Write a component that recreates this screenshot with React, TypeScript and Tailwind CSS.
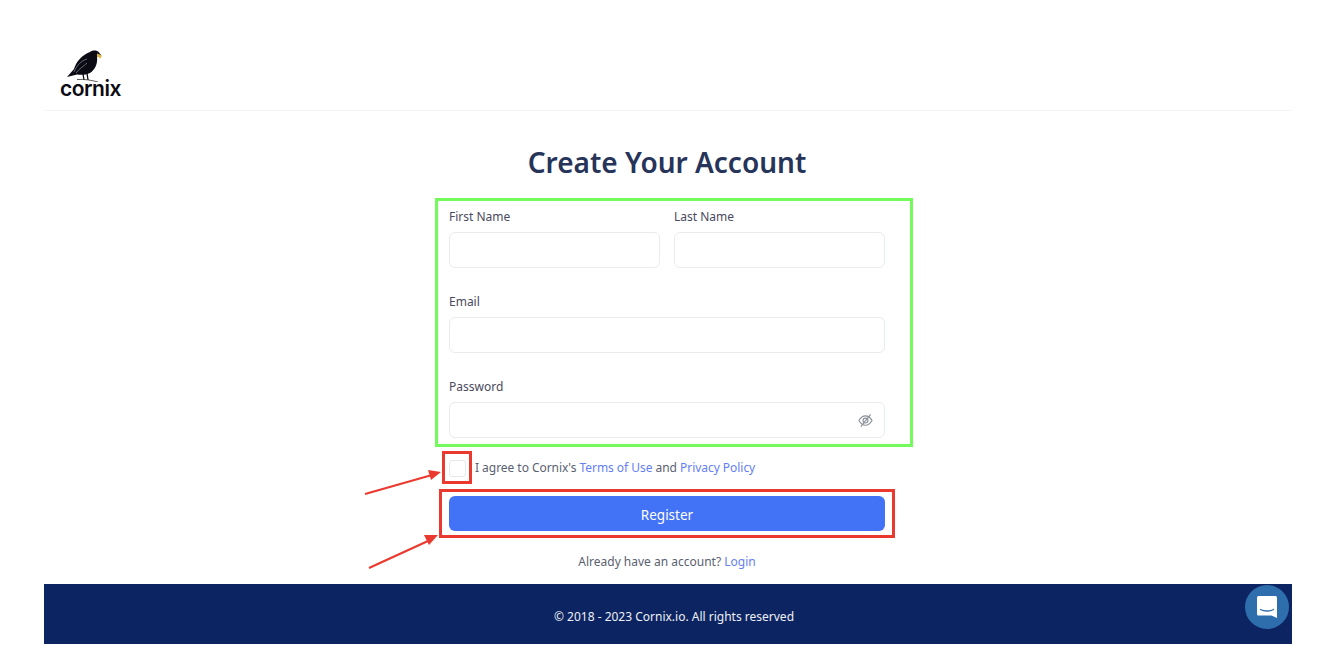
const Field = ({ label, className, children }: { label: string; className?: string; children?: React.ReactNode }) => (
  <div className={className}>
    <label className="block h-[17px] text-[12px] leading-[17px] text-[#4a4a5e]">{label}</label>
    <div className="mt-[7px] flex h-[36px] w-full items-center justify-end rounded-[6px] border border-[#e9ebef] bg-white pr-[11px]">
      {children}
    </div>
  </div>
);

const Crow = () => (
  <svg viewBox="0 0 38 32" className="ml-[6px] h-[32px] w-[38px]">
    <path
      d="M1 27 L8 19 C10 12 16 5 24 2 C27 0 31 0 33 2.5 L35 5 L31 7 C32 13 29 20 24 23 C20 25 15 25 11 24.5 Z"
      fill="#0b0b14"
    />
    <path d="M31 3.5 L36 5.5 L34.5 8.5 L31 6.5 Z" fill="#d8b84a" />
    <path d="M17 24 L18 30 M21 23 L22 30" stroke="#0b0b14" strokeWidth="1.3" fill="none" />
    <path d="M11 29.5 C18 29 25 30 32 32" stroke="#333" strokeWidth="0.8" fill="none" />
    <path d="M8 22 C11 15 15 11 21 9 M10 23 C14 18 18 16 21 13" stroke="#7a7e90" strokeWidth="0.8" fill="none" />
  </svg>
);

const EyeSlash = () => (
  <svg viewBox="0 0 16 16" className="h-[15px] w-[15px]" fill="none" stroke="#8b8f99" strokeWidth="1.2">
    <path d="M1 8 C3 4.5 5.5 3 8 3 C10.5 3 13 4.5 15 8 C13 11.5 10.5 13 8 13 C5.5 13 3 11.5 1 8 Z" />
    <circle cx="8" cy="8" r="2.6" />
    <path d="M3 14.5 L13.5 1.5" />
  </svg>
);

export default function App() {
  return (
    <div className="relative min-h-[668px] bg-white font-['Noto_Sans',sans-serif]">
      <div className="ml-[44px] w-[1248px] pt-[44px]">
        <header className="flex h-[67px] border-b border-[#f3f4f6] pl-[16px] pt-[6px]">
          <div className="flex flex-col">
            <Crow />
            <span className="-mt-[4px] font-['Inter',sans-serif] text-[21px] font-semibold leading-[22px] tracking-[-0.5px] text-[#0b0b14]">
              cornix
            </span>
          </div>
        </header>

        <main className="flex flex-col items-center pr-[2px]">
          <h1 className="mt-[31px] h-[40px] text-[28px] font-semibold leading-[40px] text-[#27345a]">
            Create Your Account
          </h1>
          <form className="mt-[26px] flex w-[436px] flex-col">
            <div className="flex flex-col gap-[25px]">
              <div className="flex gap-[14px]">
                <Field label="First Name" className="flex-1" />
                <Field label="Last Name" className="flex-1" />
              </div>
              <Field label="Email" />
              <Field label="Password">
                <EyeSlash />
              </Field>
            </div>
            <div className="mt-[21px] flex h-[18px] items-center">
              <input type="checkbox" className="h-[17px] w-[17px] appearance-none rounded-[3px] border border-[#e5e7eb] bg-white" />
              <span className="ml-[9px] text-[12px] tracking-[-0.04px] text-[#5a5f72]">
                I agree to Cornix's <a className="text-[#6480f2]">Terms of Use</a> and{" "}
                <a className="text-[#6480f2]">Privacy Policy</a>
              </span>
            </div>
            <button type="button" className="mt-[19px] block h-[35px] w-full rounded-[6px] bg-[#4272f5] pt-[3px] text-[13.5px] text-white">
              Register
            </button>
            <p className="mt-[22px] h-[18px] text-center text-[12px] leading-[18px] text-[#5a5f70]">
              Already have an account? <a className="text-[#6480f2]">Login</a>
            </p>
          </form>
        </main>

        <footer className="mt-[13px] flex h-[60px] items-center justify-center bg-[#0c2461] pl-[12px] pt-[5px] text-[12px] text-[#eef0f5]">
          © 2018 - 2023 Cornix.io. All rights reserved
        </footer>
      </div>

      {/* annotations drawn over the page */}
      <div className="absolute left-[435px] top-[198px] h-[249px] w-[478px] border-[3px] border-[#73fb5c]" />
      <div className="absolute left-[442px] top-[451px] h-[33px] w-[30px] border-[3px] border-[#ea3a2f]" />
      <div className="absolute left-[439px] top-[489px] h-[49px] w-[456px] border-[3px] border-[#ea3a2f]" />
      <svg className="absolute left-[360px] top-[465px] h-[110px] w-[85px]" viewBox="0 0 85 110">
        <path d="M5 29 L72 10" stroke="#ea3a2f" strokeWidth="2.2" />
        <path d="M81 7 L68 5 L71 15 Z" fill="#ea3a2f" />
        <path d="M9 103 L68 76" stroke="#ea3a2f" strokeWidth="2.2" />
        <path d="M78 70 L64 70 L69 80 Z" fill="#ea3a2f" />
      </svg>

      <div className="absolute left-[1245px] top-[585px] flex h-[44px] w-[44px] items-center justify-center rounded-full bg-[#2f6ead]">
        <svg viewBox="0 0 20 22" className="h-[22px] w-[20px]">
          <path d="M1.5 0 H18.5 A1.5 1.5 0 0 1 20 1.5 V22 L14.5 19.5 H1.5 A1.5 1.5 0 0 1 0 18 V1.5 A1.5 1.5 0 0 1 1.5 0 Z" fill="#fff" />
          <path d="M3.5 13.5 C7 15.5 13 15.5 16.5 13.5" stroke="#2f6ead" strokeWidth="1.3" fill="none" strokeLinecap="round" />
        </svg>
      </div>
    </div>
  );
}
